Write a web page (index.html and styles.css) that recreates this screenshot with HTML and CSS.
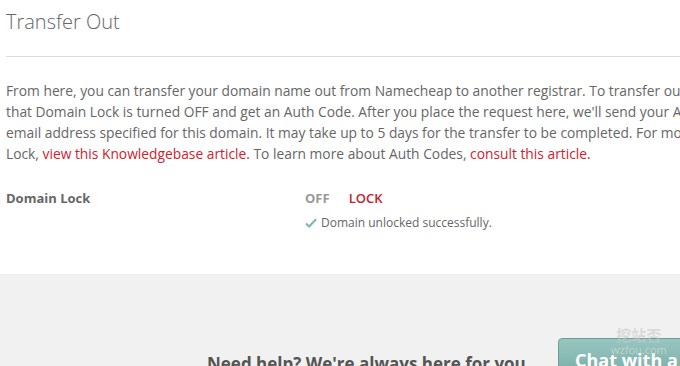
FILE: index.html
```html
<!DOCTYPE html>
<html>
<head>
<meta charset="utf-8">
<link rel="stylesheet" href="styles.css">
</head>
<body>
<div class="page">
  <div class="main">
    <div class="header"><h1 class="title">Transfer Out</h1></div>
    <p class="intro">
      <span class="line">From here, you can transfer your domain name out from Namecheap to another registrar. To transfer out, please make sure</span>
      <span class="line">that Domain Lock is turned OFF and get an Auth Code. After you place the request here, we'll send your Auth Code to the</span>
      <span class="line">email address specified for this domain. It may take up to 5 days for the transfer to be completed. For more info on Domain</span>
      <span class="line">Lock, <a class="link" href="#">view this Knowledgebase article.</a> To learn more about Auth Codes, <a class="link" href="#">consult this article.</a></span>
    </p>
    <div class="row">
      <div class="label">Domain Lock</div>
      <div class="value">
        <div class="state"><span class="off">OFF</span><a class="lock" href="#">LOCK</a></div>
        <div class="msg"><svg class="check" width="12" height="10" viewBox="0 0 12 10"><path d="M1 5.5 L4.2 8.5 L11 1.2" fill="none" stroke="#7fb5ae" stroke-width="2"/></svg>Domain unlocked successfully.</div>
      </div>
    </div>
  </div>
  <div class="footer">
    <div class="help">
      <span class="help-text">Need help? We're always here for you.</span>
      <a class="chat" href="#">Chat with a Live Person</a>
    </div>
  </div>
  <div class="watermark"><div class="wm-cn">挖站否</div><div class="wm-en">wzfou.com</div></div>
</div>
</body>
</html>
```
FILE: styles.css
```css
html, body {
  margin: 0;
  padding: 0;
  background: #fff;
  overflow: hidden;
}
body {
  font-family: "Open Sans", Lato, "Noto Sans CJK SC", sans-serif;
  color: #666;
}
.page {
  position: relative;
  width: 680px;
  height: 366px;
  overflow: hidden;
}
.main {
  padding-left: 6px;
  width: 1000px;
}
.header {
  width: 674px;
  height: 56px;
  border-bottom: 1px solid #dcdcdc;
}
.title {
  margin: 0;
  font-size: 20px;
  font-weight: 300;
  line-height: 44px;
  color: #666;
}
.intro {
  margin: 23px 0 0 0;
  font-size: 13.8px;
  line-height: 21px;
  color: #666;
}
.line {
  display: block;
  white-space: nowrap;
}
.link {
  color: #d4202c;
  text-decoration: none;
}
.row {
  display: flex;
  margin-top: 24px;
  height: 86px;
}
.label {
  width: 299px;
  font-size: 13px;
  font-weight: 700;
  line-height: 20px;
  color: #666;
}
.state {
  display: flex;
  gap: 19px;
  font-size: 13px;
  line-height: 20px;
  font-weight: 700;
}
.off {
  color: #999;
}
.lock {
  color: #c8202a;
  font-weight: 600;
  text-decoration: none;
}
.msg {
  display: flex;
  align-items: center;
  gap: 4px;
  margin-top: 5px;
  font-size: 12px;
  line-height: 20px;
  color: #666;
}
.footer {
  background: #f1f1f1;
  height: 92px;
}
.help {
  display: flex;
  align-items: flex-start;
  padding: 64px 0 0 207px;
  width: 900px;
}
.help-text {
  font-size: 17px;
  font-weight: 700;
  color: #555;
  margin-top: 13px;
  line-height: 26px;
  width: 351px;
}
.chat {
  display: block;
  padding: 8px 16px;
  border: 1px solid #6a9f98;
  border-radius: 4px;
  background: linear-gradient(#98c6c0, #74aaa2);
  color: #fff;
  font-size: 18px;
  font-weight: 700;
  line-height: 26px;
  text-decoration: none;
  white-space: nowrap;
}
.watermark {
  position: absolute;
  left: 611px;
  top: 326px;
  text-align: center;
  pointer-events: none;
}
.wm-cn {
  font-size: 15px;
  font-weight: 700;
  line-height: 18px;
  color: rgba(200,200,200,0.6);
}
.wm-en {
  font-size: 11px;
  line-height: 12px;
  color: rgba(220,220,220,0.7);
}
```
